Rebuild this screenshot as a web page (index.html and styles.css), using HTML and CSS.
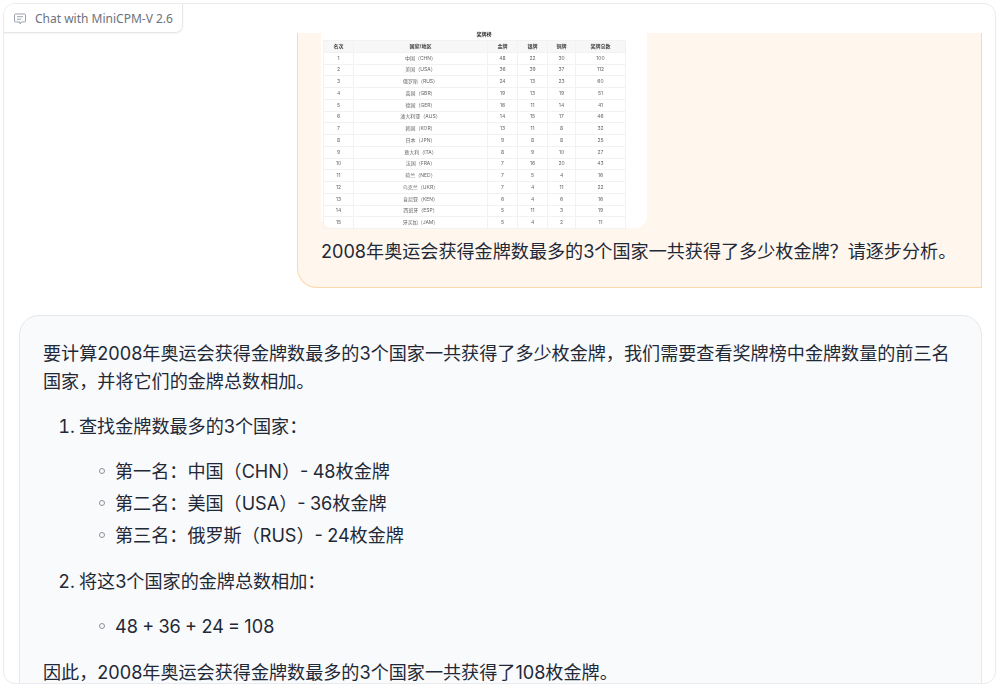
FILE: index.html
```html
<!DOCTYPE html>
<html lang="zh-CN">
<head>
  <meta charset="UTF-8">
  <meta name="viewport" content="width=device-width, initial-scale=1.0">
  <title>Chat with MiniCPM-V 2.6</title>
  <link rel="stylesheet" href="styles.css">
</head>
<body>

  <div class="frame">
    <div class="tab">
      <svg class="tab-icon" width="12" height="12" viewBox="0 0 12 12" fill="none" stroke="#9ca3af" stroke-width="1">
        <path d="M1.5 1h9a1 1 0 0 1 1 1v6a1 1 0 0 1-1 1H7.5L6 11 6 9H1.5a1 1 0 0 1-1-1V2a1 1 0 0 1 1-1z"/>
        <path d="M3 3.7h6M3 6.2h4"/>
      </svg>
      <span>Chat with MiniCPM-V 2.6</span>
    </div>

    <div class="chat">
      <!-- User message -->
      <div class="bubble user">
        <div class="picture">
          <div class="picture-title">奖牌榜</div>
          <table class="medals">
            <tr><th class="c-rank">名次</th><th class="c-name">国家/地区</th><th class="c-num">金牌</th><th class="c-num">银牌</th><th class="c-last">铜牌</th><th>奖牌总数</th></tr>
            <tr><td>1</td><td>中国（CHN）</td><td>48</td><td>22</td><td>30</td><td>100</td></tr>
            <tr><td>2</td><td>美国（USA）</td><td>36</td><td>39</td><td>37</td><td>112</td></tr>
            <tr><td>3</td><td>俄罗斯（RUS）</td><td>24</td><td>13</td><td>23</td><td>60</td></tr>
            <tr><td>4</td><td>英国（GBR）</td><td>19</td><td>13</td><td>19</td><td>51</td></tr>
            <tr><td>5</td><td>德国（GER）</td><td>16</td><td>11</td><td>14</td><td>41</td></tr>
            <tr><td>6</td><td>澳大利亚（AUS）</td><td>14</td><td>15</td><td>17</td><td>46</td></tr>
            <tr><td>7</td><td>韩国（KOR）</td><td>13</td><td>11</td><td>8</td><td>32</td></tr>
            <tr><td>8</td><td>日本（JPN）</td><td>9</td><td>8</td><td>8</td><td>25</td></tr>
            <tr><td>9</td><td>意大利（ITA）</td><td>8</td><td>9</td><td>10</td><td>27</td></tr>
            <tr><td>10</td><td>法国（FRA）</td><td>7</td><td>16</td><td>20</td><td>43</td></tr>
            <tr><td>11</td><td>荷兰（NED）</td><td>7</td><td>5</td><td>4</td><td>16</td></tr>
            <tr><td>12</td><td>乌克兰（UKR）</td><td>7</td><td>4</td><td>11</td><td>22</td></tr>
            <tr><td>13</td><td>肯尼亚（KEN）</td><td>6</td><td>4</td><td>6</td><td>16</td></tr>
            <tr><td>14</td><td>西班牙（ESP）</td><td>5</td><td>11</td><td>3</td><td>19</td></tr>
            <tr><td>15</td><td>牙买加（JAM）</td><td>5</td><td>4</td><td>2</td><td>11</td></tr>
          </table>
        </div>
        <p>2008年奥运会获得金牌数最多的3个国家一共获得了多少枚金牌？请逐步分析。</p>
      </div>

      <!-- Bot message -->
      <div class="bubble bot">
        <p>要计算2008年奥运会获得金牌数最多的3个国家一共获得了多少枚金牌，我们需要查看奖牌榜中金牌数量的前三名国家，并将它们的金牌总数相加。</p>
        <ol>
          <li>
            <p>查找金牌数最多的3个国家：</p>
            <ul>
              <li>第一名：中国（CHN）- 48枚金牌</li>
              <li>第二名：美国（USA）- 36枚金牌</li>
              <li>第三名：俄罗斯（RUS）- 24枚金牌</li>
            </ul>
          </li>
          <li>
            <p>将这3个国家的金牌总数相加：</p>
            <ul>
              <li>48 + 36 + 24 = 108</li>
            </ul>
          </li>
        </ol>
        <p>因此，2008年奥运会获得金牌数最多的3个国家一共获得了108枚金牌。</p>
      </div>
    </div>
  </div>

</body>
</html>
```

FILE: styles.css
```css
body {
  font-family: Inter, "Noto Sans CJK SC", sans-serif;
  margin: 0;
  padding: 0;
  background-color: #fff;
}

.frame {
  display: flex;
  flex-direction: column;
  box-sizing: border-box;
  width: 993px;
  height: 681px;
  margin: 3px 0 0 3px;
  background-color: #fff;
  border: 1px solid #e9ebee;
  border-radius: 12px;
  overflow: hidden;
}

.tab {
  display: flex;
  align-items: center;
  flex-shrink: 0;
  box-sizing: border-box;
  width: 179px;
  height: 29px;
  padding: 0 0 0 10px;
  gap: 9px;
  color: #6b7280;
  font-family: "Noto Sans", "Noto Sans CJK SC", sans-serif;
  font-size: 12px;
  background-color: #fff;
  border-right: 1px solid #e5e7eb;
  border-bottom: 1px solid #e5e7eb;
  border-bottom-right-radius: 8px;
  box-shadow: 0 1px 2px rgba(0, 0, 0, 0.05);
  position: relative;
  z-index: 1;
}

.tab-icon {
  margin-top: 1px;
}

.chat {
  display: flex;
  flex-direction: column;
  flex: 1;
  gap: 27px;
  padding: 0 13px 0 15px;
}

.bubble {
  box-sizing: border-box;
  flex-shrink: 0;
  font-size: 18.1px;
  line-height: 28px;
  word-spacing: -0.8px;
  color: #1f2937;
  border-style: solid;
  border-width: 1px;
}

.bubble p {
  margin: 0;
}

.user {
  align-self: flex-end;
  width: 685px;
  padding: 0 23px 22px;
  background-color: #fff7ed;
  border-color: #fed7aa;
  border-top: none;
  border-radius: 0 0 0 20px;
}

.bot {
  padding: 23px 23px 0;
  background-color: #f9fafb;
  border-color: #e5e7eb;
  border-radius: 20px 20px 0 0;
}

.picture {
  box-sizing: border-box;
  width: 326px;
  height: 197px;
  margin-bottom: 9px;
  padding: 0 2px;
  background-color: #fff;
  border-radius: 0 0 12px 12px;
  filter: blur(0.35px);
}

.picture-title {
  height: 7px;
  margin-top: -2px;
  margin-bottom: 2px;
  font-size: 5px;
  line-height: 7px;
  font-weight: bold;
  text-align: center;
  color: #333;
}

.medals {
  width: 303px;
  margin: 0;
  table-layout: fixed;
  border-collapse: collapse;
  font-size: 5px;
  line-height: 7px;
  color: #666;
}

.medals th,
.medals td {
  height: 10.75px;
  padding: 0;
  text-align: center;
  border: 1px solid #f2f2f2;
}

.medals th {
  background-color: #f7f7f7;
  color: #444;
}

.c-rank { width: 29px; }
.c-name { width: 133px; }
.c-num { width: 29px; }
.c-last { width: 27px; }

.bot ol {
  margin: 17px 0 18px;
  padding-left: 36px;
}

.bot ol > li + li {
  margin-top: 18px;
}

.bot ul {
  margin: 17px 0 0;
  padding-left: 36px;
  list-style-type: none;
}

.bot ul li {
  position: relative;
}

.bot ul li + li {
  margin-top: 4px;
}

/* ring bullet, the default circle marker sits too far left */
.bot ul li::before {
  content: "";
  position: absolute;
  left: -16px;
  top: 11px;
  box-sizing: border-box;
  width: 6px;
  height: 6px;
  border: 1px solid #8b929c;
  border-radius: 50%;
}
```
